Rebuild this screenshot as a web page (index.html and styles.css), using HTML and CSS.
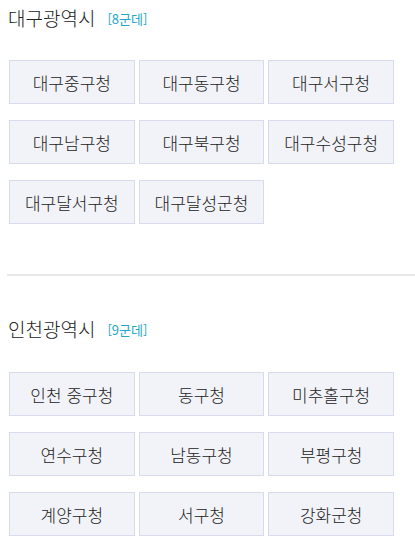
FILE: index.html
```html
<!DOCTYPE html>
<html lang="ko">
<head>
<meta charset="utf-8">
<link rel="stylesheet" href="styles.css">
</head>
<body>
<section class="region">
  <h2 class="region-title">대구광역시 <span class="count">[8군데]</span></h2>
  <div class="grid">
    <button class="office">대구중구청</button>
    <button class="office">대구동구청</button>
    <button class="office">대구서구청</button>
    <button class="office">대구남구청</button>
    <button class="office">대구북구청</button>
    <button class="office">대구수성구청</button>
    <button class="office">대구달서구청</button>
    <button class="office">대구달성군청</button>
  </div>
</section>
<hr class="divider">
<section class="region second">
  <h2 class="region-title">인천광역시 <span class="count">[9군데]</span></h2>
  <div class="grid">
    <button class="office">인천 중구청</button>
    <button class="office">동구청</button>
    <button class="office">미추홀구청</button>
    <button class="office">연수구청</button>
    <button class="office">남동구청</button>
    <button class="office">부평구청</button>
    <button class="office">계양구청</button>
    <button class="office">서구청</button>
    <button class="office">강화군청</button>
  </div>
</section>
</body>
</html>
```
FILE: styles.css
```css
html, body {
  margin: 0;
  padding: 0;
  background: #ffffff;
  font-family: "Noto Sans CJK KR", "Noto Sans", sans-serif;
  color: #333333;
}
.region {
  padding: 0 21px 0 9px;
}
.region-title {
  margin: 0 0 0 -1px;
  height: 36px;
  line-height: 36px;
  font-size: 19px;
  font-weight: 300;
  color: #222222;
  display: flex;
  align-items: center;
}
.count {
  margin-left: 12px;
  font-size: 13px;
  font-weight: 400;
  color: #23a7c7;
  padding-top: 2px;
}
.grid {
  margin-top: 24px;
  display: grid;
  grid-template-columns: repeat(3, 1fr);
  column-gap: 4px;
  row-gap: 16px;
}
.office {
  height: 44px;
  margin: 0;
  padding: 0;
  border: 1px solid #d8dbee;
  background: #f2f3f8;
  font-family: inherit;
  font-size: 17px;
  font-weight: 300;
  color: #222222;
  text-align: center;
}
.divider {
  margin: 50px 0 0 7px;
  height: 2px;
  border: 0;
  background: #e8e8e8;
}
.second {
  margin-top: 35px;
}
.second .grid {
  margin-top: 25px;
}
```
